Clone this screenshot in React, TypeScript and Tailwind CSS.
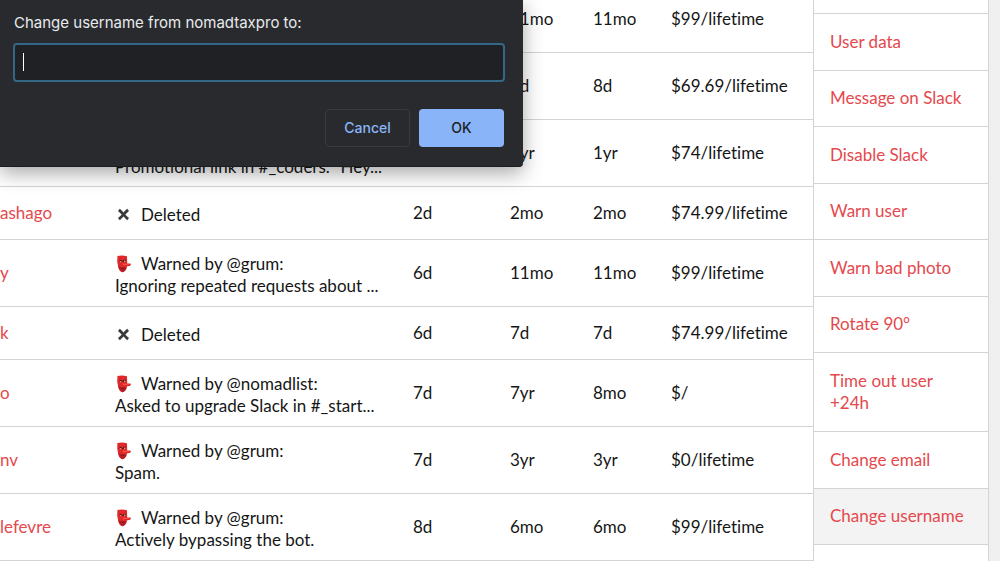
interface Member {
    name: string;
    status?: "deleted" | "warned";
    by?: string;
    reason?: string;
    seen?: string;
    joined: string;
    paid: string;
    plan: string;
}

const members: Member[] = [
    { name: "", joined: "11mo", paid: "11mo", plan: "$99/lifetime" },
    { name: "", joined: "8d", paid: "8d", plan: "$69.69/lifetime" },
    {
        name: "",
        reason: "Promotional link in #_coders. “Hey...",
        joined: "1yr",
        paid: "1yr",
        plan: "$74/lifetime",
    },
    {
        name: "ashago",
        status: "deleted",
        seen: "2d",
        joined: "2mo",
        paid: "2mo",
        plan: "$74.99/lifetime",
    },
    {
        name: "y",
        status: "warned",
        by: "@grum",
        reason: "Ignoring repeated requests about ...",
        seen: "6d",
        joined: "11mo",
        paid: "11mo",
        plan: "$99/lifetime",
    },
    {
        name: "k",
        status: "deleted",
        seen: "6d",
        joined: "7d",
        paid: "7d",
        plan: "$74.99/lifetime",
    },
    {
        name: "o",
        status: "warned",
        by: "@nomadlist",
        reason: "Asked to upgrade Slack in #_start...",
        seen: "7d",
        joined: "7yr",
        paid: "8mo",
        plan: "$/",
    },
    {
        name: "nv",
        status: "warned",
        by: "@grum",
        reason: "Spam.",
        seen: "7d",
        joined: "3yr",
        paid: "3yr",
        plan: "$0/lifetime",
    },
    {
        name: "lefevre",
        status: "warned",
        by: "@grum",
        reason: "Actively bypassing the bot.",
        seen: "8d",
        joined: "6mo",
        paid: "6mo",
        plan: "$99/lifetime",
    },
];

const actions = [
    "User data",
    "Message on Slack",
    "Disable Slack",
    "Warn user",
    "Warn bad photo",
    "Rotate 90°",
    "Time out user +24h",
    "Change email",
    "Change username",
];

function GoblinIcon() {
    return (
        <svg width="18" height="18" viewBox="0 0 18 18" aria-hidden="true">
            <path
                d="M2.4 1Q7 0 12 1.2L12.2 8.6L15.4 8.4Q16.6 9.4 15.2 10.8L11.8 11.6Q11.6 16 7.6 17.2Q4.2 16.4 3.4 12.4Q1.6 7 2.4 1Z"
                fill="#e0282a"
            />
            <path d="M3 11Q4.4 15.8 7.6 17.2Q11 16.2 11.6 12L8 13Z" fill="#b81d24" />
            <path d="M4.4 4.6L7.4 6L10.6 4.2L10.4 5.8L8.4 7L5 6.2Z" fill="#3a161a" />
            <circle cx="5.8" cy="6.6" r="0.6" fill="#f5d9a0" />
            <circle cx="9.6" cy="6.2" r="0.6" fill="#f5d9a0" />
            <path d="M7.6 8.4L15.4 9.2L8.4 10.4Z" fill="#f4514a" />
            <path d="M5.8 12.4Q7.8 13.2 9.8 12.2L9.2 13.4L6.6 13.6Z" fill="#5a1418" />
        </svg>
    );
}

function CrossIcon() {
    return (
        <svg width="18" height="18" viewBox="0 0 18 18" aria-hidden="true">
            <path
                d="M3.9 3.9Q7 6.6 8.5 8.5T13.1 13.1M13.1 3.9Q10 6.6 8.5 8.5T3.9 13.1"
                stroke="#3a3a3a"
                strokeWidth="2.8"
                fill="none"
            />
        </svg>
    );
}

function Status({ member }: { member: Member }) {
    return (
        <div className="flex flex-col">
            {member.status && (
                <p className="flex items-center gap-2">
                    {member.status === "deleted" ? <CrossIcon /> : <GoblinIcon />}
                    {member.status === "deleted" ? "Deleted" : `Warned by ${member.by}:`}
                </p>
            )}
            {member.reason && <p>{member.reason}</p>}
        </div>
    );
}

function MemberTable() {
    return (
        <table className="w-full table-fixed border-separate border-spacing-0 -mt-[14px]">
            <colgroup>
                <col className="w-[115px]" />
                <col className="w-[298px]" />
                <col className="w-[97px]" />
                <col className="w-[83px]" />
                <col className="w-[78px]" />
                <col />
            </colgroup>
            <tbody>
                {members.map((member, i) => (
                    <tr
                        key={i}
                        className={`whitespace-nowrap *:border-b *:border-[#d4d4d4] ${
                            member.status === "deleted" ? "h-[53px]" : "h-[67px]"
                        }`}
                    >
                        <td className="p-0">
                            {member.name && (
                                <a href="#" className="text-[#e5484d]">
                                    {member.name}
                                </a>
                            )}
                        </td>
                        <td className={member.status ? "p-0 pt-1" : "p-0 pb-2 align-bottom"}>
                            <Status member={member} />
                        </td>
                        <td className="p-0">{member.seen}</td>
                        <td className="p-0">{member.joined}</td>
                        <td className="p-0">{member.paid}</td>
                        <td className="p-0">{member.plan}</td>
                    </tr>
                ))}
            </tbody>
        </table>
    );
}

function ActionMenu() {
    return (
        <nav className="w-[176px] shrink-0 flex flex-col border-x border-[#d4d4d4]">
            <div className="h-[14px] border-b border-[#d4d4d4]" />
            {actions.map((action) => (
                <a
                    key={action}
                    href="#"
                    className={`flex items-center px-4 border-b border-[#d4d4d4] text-[#e5484d] ${
                        action === "Change username" ? "bg-[#f3f3f3]" : ""
                    } ${action.length > 16 ? "h-[79px] pr-8" : "flex-1"}`}
                >
                    {action}
                </a>
            ))}
            <div className="h-4" />
        </nav>
    );
}

function UsernameDialog() {
    return (
        <form
            role="dialog"
            className="absolute top-0 left-0 w-[523px] h-[167px] pt-3 pl-[13px] pr-[18px] flex flex-col rounded-br bg-[#292a2d] border-b border-[#1b1c1e] shadow-[0_6px_20px_rgba(0,0,0,0.35)] font-['Inter',sans-serif] text-[15px]"
        >
            <label htmlFor="username" className="pl-px text-[#e8eaed] leading-[22px]">
                Change username from nomadtaxpro to:
            </label>
            <div className="mt-[9px] h-[39px] px-2 pb-px flex items-center rounded border-2 border-[#356787] bg-[#202124]">
                <span className="w-px h-[18px] bg-white" />
                <input
                    id="username"
                    type="text"
                    className="flex-1 bg-transparent text-white outline-none"
                />
            </div>
            <div className="mt-[27px] pr-px flex justify-end gap-[9px] font-medium text-sm">
                <button
                    type="button"
                    className="w-[85px] h-[38px] rounded border border-[#3a3b3f] text-[#8ab4f8]"
                >
                    Cancel
                </button>
                <button
                    type="submit"
                    className="w-[85px] h-[38px] rounded bg-[#8ab4f8] text-[#202124]"
                >
                    OK
                </button>
            </div>
        </form>
    );
}

export default function App() {
    return (
        <div className="relative h-screen flex overflow-hidden bg-[#f0f0f0] font-['Lato',sans-serif] text-[17px] leading-[22px] text-[#161616] [font-variant-ligatures:none]">
            <main className="flex-1 min-w-0 bg-white">
                <MemberTable />
            </main>
            <div className="flex bg-white mr-[11px]">
                <ActionMenu />
            </div>
            <UsernameDialog />
        </div>
    );
}
